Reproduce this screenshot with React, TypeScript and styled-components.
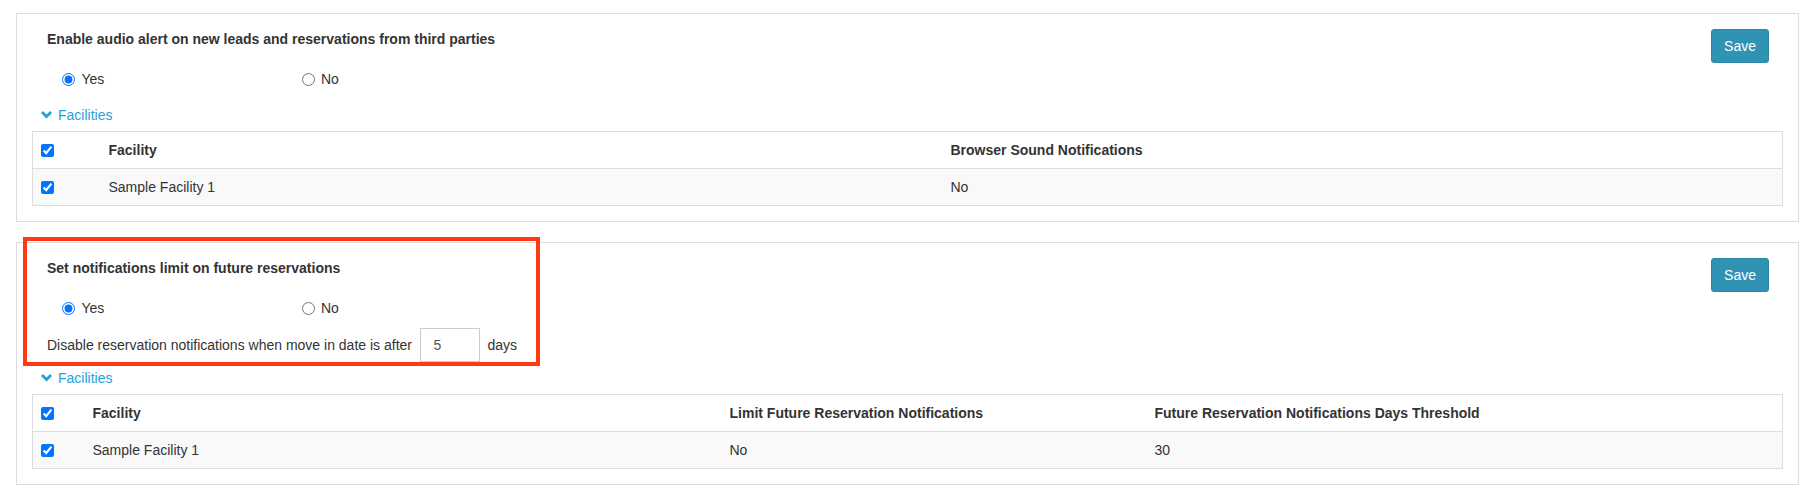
import styled, { createGlobalStyle } from 'styled-components'

const GlobalStyle = createGlobalStyle`
  html, body {
    margin: 0;
    padding: 0;
    background: #fff;
  }
  body {
    font-family: "Liberation Sans", Arial, Helvetica, sans-serif;
    font-size: 14px;
    color: #333;
  }
`

const Page = styled.div`
  padding: 13px 13px 0 16px;
  width: 1812px;
  box-sizing: border-box;
`

const Card = styled.section`
  position: relative;
  border: 1px solid #ddd;
  padding: 15px;
  background: #fff;
  & + & {
    margin-top: 20px;
  }
`

const TopRow = styled.div`
  display: flex;
  justify-content: space-between;
  align-items: flex-start;
`

const Settings = styled.div`
  padding-left: 15px;
`

const Title = styled.div`
  font-weight: bold;
  line-height: 20px;
`

const RadioRow = styled.div`
  display: flex;
  margin-top: 20px;
  padding-left: 15px;
  height: 20px;
  align-items: center;
`

const Option = styled.label`
  display: flex;
  align-items: center;
  width: 239.5px;
  line-height: 20px;

  input {
    margin: 0 6.5px 0 0;
    width: 13px;
    height: 13px;
  }
`

const LimitRow = styled.div`
  display: flex;
  align-items: center;
  margin-top: 10px;
  height: 34px;
`

const DaysInput = styled.input`
  box-sizing: border-box;
  width: 60px;
  height: 34px;
  margin: 0 7px 0 8.5px;
  padding: 6px 12px;
  border: 1px solid #ccc;
  border-radius: 0;
  font-family: inherit;
  font-size: 14px;
  color: #555;
  outline: none;
`

const SaveButton = styled.button`
  height: 34px;
  padding: 6px 12px;
  margin-right: 14px;
  border: 1px solid #2b87a5;
  border-radius: 3px;
  background: #3193b3;
  color: #fff;
  font-family: inherit;
  font-size: 14px;
  line-height: 20px;
  cursor: pointer;
`

const Toggle = styled.a<{ $gap: number }>`
  display: flex;
  align-items: center;
  gap: 6px;
  margin-top: ${(p) => p.$gap}px;
  padding-left: 9px;
  line-height: 20px;
  color: #2a9fd6;
  text-decoration: none;
  cursor: pointer;
`

const Grid = styled.table`
  width: 100%;
  margin-top: 6px;
  border-collapse: collapse;
  table-layout: fixed;
  border: 1px solid #ddd;

  th,
  td {
    padding: 8px;
    height: 20px;
    line-height: 20px;
    text-align: left;
    vertical-align: middle;
    border-top: 1px solid #ddd;
  }
  th {
    font-weight: bold;
  }
  tbody tr {
    background: #f9f9f9;
  }
  input[type='checkbox'] {
    display: block;
    margin: 0;
    width: 13px;
    height: 13px;
  }
`

const Col = styled.col<{ $w: number }>`
  width: ${(p) => p.$w}px;
`

const Highlight = styled.div`
  position: absolute;
  left: 6px;
  top: -6px;
  width: 517px;
  height: 129px;
  box-sizing: border-box;
  border: 4px solid #ff3a10;
  pointer-events: none;
`

const Chevron = () => (
  <svg width="11" height="8" viewBox="0 0 11 8" aria-hidden="true">
    <polygon points="0,2 2,0 5.5,3.5 9,0 11,2 5.5,7.5" fill="currentColor" />
  </svg>
)

const YesNo = ({ name }: { name: string }) => (
  <RadioRow>
    <Option>
      <input type="radio" name={name} defaultChecked />
      Yes
    </Option>
    <Option>
      <input type="radio" name={name} />
      No
    </Option>
  </RadioRow>
)

const Check = () => <input type="checkbox" defaultChecked />

const App = () => {
  return (
    <>
      <GlobalStyle />
      <Page>
        <Card>
          <TopRow>
            <Settings>
              <Title>Enable audio alert on new leads and reservations from third parties</Title>
              <YesNo name="audio" />
            </Settings>
            <SaveButton>Save</SaveButton>
          </TopRow>
          <Toggle $gap={16}>
            <Chevron />
            Facilities
          </Toggle>
          <Grid>
            <colgroup>
              <Col $w={68} />
              <Col $w={842} />
              <Col $w={840} />
            </colgroup>
            <thead>
              <tr>
                <th><Check /></th>
                <th>Facility</th>
                <th>Browser Sound Notifications</th>
              </tr>
            </thead>
            <tbody>
              <tr>
                <td><Check /></td>
                <td>Sample Facility 1</td>
                <td>No</td>
              </tr>
            </tbody>
          </Grid>
        </Card>

        <Card>
          <TopRow>
            <Settings>
              <Title>Set notifications limit on future reservations</Title>
              <YesNo name="limit" />
              <LimitRow>
                Disable reservation notifications when move in date is after
                <DaysInput defaultValue="5" />
                days
              </LimitRow>
            </Settings>
            <SaveButton>Save</SaveButton>
          </TopRow>
          <Toggle $gap={6}>
            <Chevron />
            Facilities
          </Toggle>
          <Grid>
            <colgroup>
              <Col $w={52} />
              <Col $w={637} />
              <Col $w={425} />
              <Col $w={636} />
            </colgroup>
            <thead>
              <tr>
                <th><Check /></th>
                <th>Facility</th>
                <th>Limit Future Reservation Notifications</th>
                <th>Future Reservation Notifications Days Threshold</th>
              </tr>
            </thead>
            <tbody>
              <tr>
                <td><Check /></td>
                <td>Sample Facility 1</td>
                <td>No</td>
                <td>30</td>
              </tr>
            </tbody>
          </Grid>
          <Highlight />
        </Card>
      </Page>
    </>
  )
}

export default App
